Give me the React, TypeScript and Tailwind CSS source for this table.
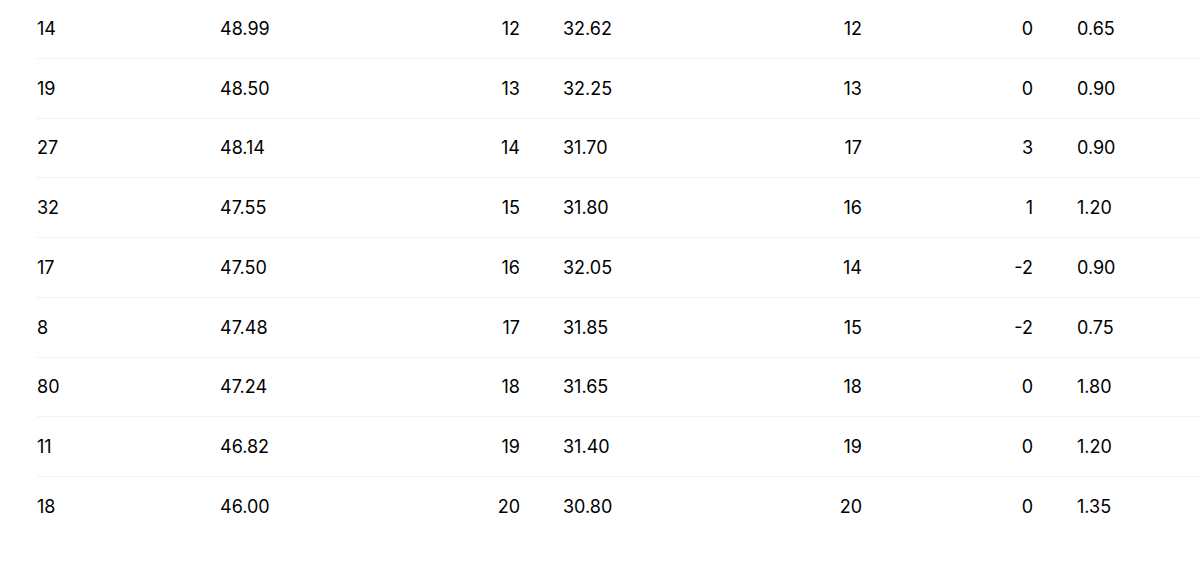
const rows = [
  ['14', '48.99', '12', '32.62', '12', '0', '0.65'],
  ['19', '48.50', '13', '32.25', '13', '0', '0.90'],
  ['27', '48.14', '14', '31.70', '17', '3', '0.90'],
  ['32', '47.55', '15', '31.80', '16', '1', '1.20'],
  ['17', '47.50', '16', '32.05', '14', '-2', '0.90'],
  ['8', '47.48', '17', '31.85', '15', '-2', '0.75'],
  ['80', '47.24', '18', '31.65', '18', '0', '1.80'],
  ['11', '46.82', '19', '31.40', '19', '0', '1.20'],
  ['18', '46.00', '20', '30.80', '20', '0', '1.35'],
];

export default function App() {
  return (
    <div className="w-[1200px] h-[567px] overflow-hidden bg-white">
      <div className="ml-[37px] -mt-[1px] w-[1200px] font-['Inter',sans-serif] text-[18px] text-black">
        {rows.map((r, i) => (
          <div
            key={i}
            className={
              'grid grid-cols-[183px_180px_120px_220px_122px_171px_200px] items-center h-[59.75px] ' +
              (i < rows.length - 1 ? 'border-b border-[#f2f2f2]' : '')
            }
          >
            <div className="text-left">{r[0]}</div>
            <div className="text-left">{r[1]}</div>
            <div className="text-right">{r[2]}</div>
            <div className="text-left pl-[43px]">{r[3]}</div>
            <div className="text-right">{r[4]}</div>
            <div className="text-right">{r[5]}</div>
            <div className="text-left pl-[44px]">{r[6]}</div>
          </div>
        ))}
      </div>
    </div>
  );
}
